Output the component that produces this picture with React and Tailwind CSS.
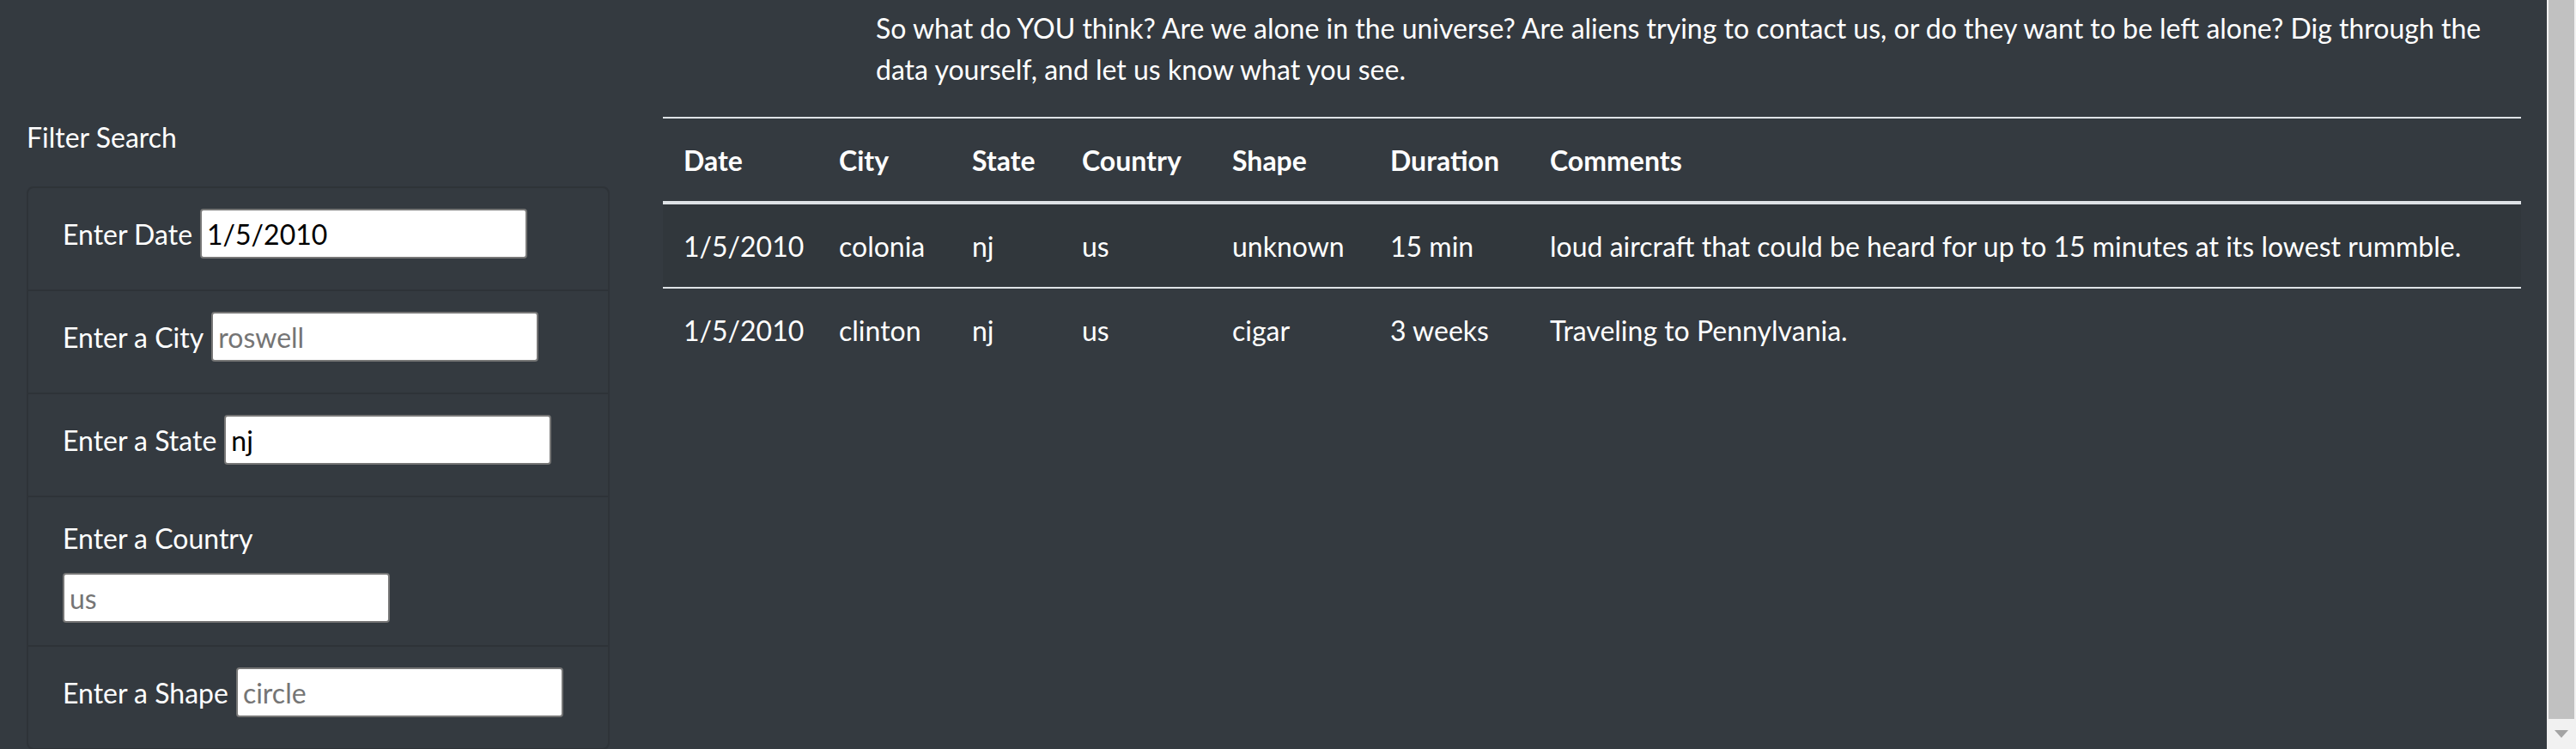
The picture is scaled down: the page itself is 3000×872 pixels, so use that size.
import React from "react";

const filters = [
	{ id: "datetime", label: "Enter Date", value: "1/5/2010", placeholder: "" },
	{ id: "city", label: "Enter a City", value: "", placeholder: "roswell" },
	{ id: "state", label: "Enter a State", value: "nj", placeholder: "" },
	{ id: "country", label: "Enter a Country", value: "", placeholder: "us", stacked: true },
	{ id: "shape", label: "Enter a Shape", value: "", placeholder: "circle" },
];

const columns = [
	{ name: "Date", width: "w-[181px]" },
	{ name: "City", width: "w-[155px]" },
	{ name: "State", width: "w-[128px]" },
	{ name: "Country", width: "w-[175px]" },
	{ name: "Shape", width: "w-[184px]" },
	{ name: "Duration", width: "w-[186px]" },
	{ name: "Comments", width: "" },
];

const sightings = [
	{
		datetime: "1/5/2010",
		city: "colonia",
		state: "nj",
		country: "us",
		shape: "unknown",
		duration: "15 min",
		comments: "loud aircraft that could be heard for up to 15 minutes at its lowest rummble.",
	},
	{
		datetime: "1/5/2010",
		city: "clinton",
		state: "nj",
		country: "us",
		shape: "cigar",
		duration: "3 weeks",
		comments: "Traveling to Pennylvania.",
	},
];

const inputClass =
	"w-[381px] h-[58px] border-2 border-[#767676] rounded-[4px] bg-white px-[6px] text-[32px] leading-[48px] text-black placeholder:text-[#757575] outline-none";

const FilterRow = ({ filter, last }) => (
	<li
		className={`px-[40px] pt-[24px] ${filter.stacked ? "pb-[26px] flex flex-col" : "pb-[36px] flex items-baseline gap-[9px]"} ${last ? "" : "border-b-2 border-[#2e3338]"}`}
	>
		<label htmlFor={filter.id} className={filter.stacked ? "mb-[16px]" : ""}>
			{filter.label}
		</label>
		<input
			id={filter.id}
			type="text"
			className={inputClass}
			defaultValue={filter.value}
			placeholder={filter.placeholder}
		/>
	</li>
);

const App = () => {
	return (
		<div
			className="w-[3000px] h-[872px] overflow-hidden flex bg-[#343a40] text-white text-[32px] leading-[48px]"
			style={{ fontFamily: "Lato, 'Open Sans', sans-serif" }}
		>
			<div className="w-[2966px] flex">
				{/* filters */}
				<aside className="w-[741px] shrink-0 pl-[31px] pt-[136px]">
					<p className="mb-[33px]">Filter Search</p>
					<ul className="w-[679px] border-2 border-[#2e3338] rounded-[8px]">
						{filters.map((filter, i) => (
							<FilterRow key={filter.id} filter={filter} last={i === filters.length - 1} />
						))}
					</ul>
				</aside>

				{/* table */}
				<main className="flex-1 pl-[31px] pr-[30px]">
					<p className="pl-[248px] pt-[9px] mb-[31px]">
						So what do YOU think? Are we alone in the universe? Are aliens trying to contact us, or do they want
						to be left alone? Dig through the
						<br />
						data yourself, and let us know what you see.
					</p>
					<table className="w-full border-separate border-spacing-0 table-fixed">
						<thead>
							<tr>
								{columns.map((col) => (
									<th
										key={col.name}
										className={`${col.width} text-left font-bold px-[24px] pt-[25px] pb-[23px] border-t-2 border-b-4 border-[#dee2e6]`}
									>
										{col.name}
									</th>
								))}
							</tr>
						</thead>
						<tbody>
							{sightings.map((s, i) => (
								<tr key={i} className={i % 2 === 0 ? "bg-black/5" : ""}>
									{[s.datetime, s.city, s.state, s.country, s.shape, s.duration, s.comments].map(
										(val, j) => (
											<td
												key={j}
												className={`px-[24px] pt-[25px] pb-[23px] ${i > 0 ? "border-t-2 border-[#dee2e6]" : ""}`}
											>
												{val}
											</td>
										)
									)}
								</tr>
							))}
						</tbody>
					</table>
				</main>
			</div>

			{/* scrollbar */}
			<div className="w-[34px] shrink-0 bg-[#f1f1f1] flex flex-col">
				<div className="ml-[2px] w-[30px] h-[837px] bg-[#c1c1c1]" />
				<div className="flex-1 flex items-center justify-center">
					<svg width="16" height="9" viewBox="0 0 16 9">
						<polygon points="0,0 16,0 8,9" fill="#a3a3a3" />
					</svg>
				</div>
			</div>
		</div>
	);
};

export default App;
